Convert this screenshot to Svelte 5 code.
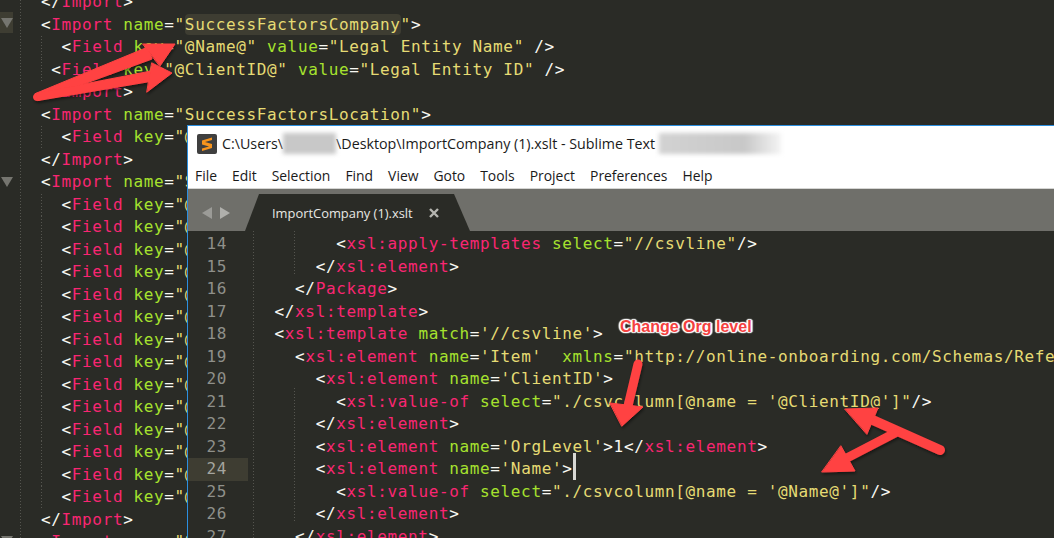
<script lang="ts">
  type Token = { cls: string; text: string };

  // tiny xml highlighter, good enough for the lines we show
  function highlight(line: string): Token[] {
    const tokens: Token[] = [];
    const re = /(^\s+)|(<\/?|\/?>)|("[^"]*"?|'[^']*')|(=)|(\|)|(\s+)|([A-Za-z][\w:-]*(?==))|([A-Za-z][\w:-]*)|(.)/g;
    let afterOpen = false;
    let inTag = false;
    for (const m of line.matchAll(re)) {
      const text = m[0];
      if (m[1] || m[6]) tokens.push({ cls: '', text });
      else if (m[2]) {
        tokens.push({ cls: 'punct', text });
        afterOpen = text.startsWith('<');
        inTag = afterOpen;
      } else if (m[3]) tokens.push({ cls: 'str', text });
      else if (m[4]) tokens.push({ cls: 'punct', text });
      else if (m[5]) tokens.push({ cls: 'caret', text: '' });
      else if (m[7] && inTag) tokens.push({ cls: 'attr', text });
      else if (m[8] && afterOpen) {
        tokens.push({ cls: 'tag', text });
        afterOpen = false;
      } else tokens.push({ cls: 'punct', text });
    }
    return tokens;
  }

  // these run under the front window, only the start of them shows
  const field = '  <Field key="@';
  const backLines = [
    '</Import>',
    '<Import name="SuccessFactorsCompany">',
    '  <Field key="@Name@" value="Legal Entity Name" />',
    ' <Field key="@ClientID@" value="Legal Entity ID" />',
    '</Import>',
    '<Import name="SuccessFactorsLocation">',
    field,
    '</Import>',
    '<Import name="S',
    ...Array(14).fill(field),
    '</Import>',
    '<Import name="S'
  ];

  const frontLines = [
    { n: 14, text: '        <xsl:apply-templates select="//csvline"/>' },
    { n: 15, text: '      </xsl:element>' },
    { n: 16, text: '    </Package>' },
    { n: 17, text: '  </xsl:template>' },
    { n: 18, text: "  <xsl:template match='//csvline'>" },
    { n: 19, text: `    <xsl:element name='Item'  xmlns="http://online-onboarding.com/Schemas/Refe` },
    { n: 20, text: "      <xsl:element name='ClientID'>" },
    { n: 21, text: `        <xsl:value-of select="./csvcolumn[@name = '@ClientID@']"/>` },
    { n: 22, text: '      </xsl:element>' },
    { n: 23, text: "      <xsl:element name='OrgLevel'>1</xsl:element>" },
    { n: 24, text: "      <xsl:element name='Name'>|", active: true },
    { n: 25, text: `        <xsl:value-of select="./csvcolumn[@name = '@Name@']"/>` },
    { n: 26, text: '      </xsl:element>' },
    { n: 27, text: '    </xsl:element>' }
  ];

  const menu = ['File', 'Edit', 'Selection', 'Find', 'View', 'Goto', 'Tools', 'Project', 'Preferences', 'Help'];
</script>

<div class="screen">
  <div class="back">
    <div class="fold-col">
      <div class="fold current"><i></i></div>
      <div class="fold second"><i></i></div>
      <div class="fold third"><i></i></div>
    </div>
    <div class="back-code">
      {#each backLines as line}
        <div class="line" class:guide={line.startsWith(' ')}>{#each highlight(line) as t}{#if t.text === '"SuccessFactorsCompany"'}<span class="str">"<span class="word">SuccessFactorsCompany</span>"</span>{:else}<span class={t.cls}>{t.text}</span>{/if}{/each}</div>
      {/each}
    </div>
  </div>

  <div class="window">
    <div class="titlebar">
      <svg class="logo" viewBox="0 0 20 20" width="20" height="20">
        <rect width="20" height="20" rx="2" fill="#3f3f3f" />
        <path d="M15 3.5 5 6.5v4l7 2-7 2v2.5l10-3v-4l-7-2 7-2z" fill="#f7941d" />
      </svg>
      <span class="path">C:\Users\</span><span class="smudge user"></span><span class="path">\Desktop\ImportCompany (1).xslt - Sublime Text</span><span class="smudge licence"></span>
    </div>
    <div class="menubar">
      {#each menu as item}<span>{item}</span>{/each}
    </div>
    <div class="tabbar">
      <div class="arrows"><i class="left"></i><i class="right"></i></div>
      <div class="tab">
        <span>ImportCompany (1).xslt</span>
        <svg viewBox="0 0 10 10" width="10" height="10"><path d="M1 1 9 9M9 1 1 9" stroke="#b5b5b0" stroke-width="2.4" /></svg>
      </div>
    </div>
    <div class="front-code">
      {#each frontLines as line}
        <div class="row">
          <div class="num" class:active={line.active}>{line.n}</div>
          <div class="line">{#each highlight(line.text) as t}<span class={t.cls}>{t.text}</span>{/each}</div>
        </div>
      {/each}
    </div>
  </div>

  <svg class="arrows-layer" viewBox="0 0 1054 538" width="1054" height="538">
    <defs>
      <filter id="shade" x="-20%" y="-20%" width="140%" height="140%">
        <feDropShadow dx="1" dy="2" stdDeviation="1.5" flood-color="#000" flood-opacity="0.45" />
      </filter>
    </defs>
    <g fill="#ff4242" stroke="#ff4242" stroke-linecap="round" stroke-linejoin="round" filter="url(#shade)">
      <circle cx="37" cy="97" r="3.5" />
      <path d="M35.500 93.500 148 47 152 59 38.500 100.500z" stroke-width="1" />
      <path d="M36 93.500 151 71 153 81 38 100.500z" stroke-width="1" />
      <path d="M143 44 175 44 160 66z" stroke-width="1" />
      <path d="M152 63 172 73 147 92z" stroke-width="1" />
      <path d="M638 364 628 406" stroke-width="9" />
      <path d="M610 403 643 407 622 426z" stroke-width="1" />
      <path d="M940 450 866 417" stroke-width="10" />
      <path d="M845 409 878 408 867 434z" stroke-width="1" />
      <path d="M895 433 843 460" stroke-width="9" />
      <path d="M841 446 855 471 822 472z" stroke-width="1" />
    </g>
  </svg>

  <div class="note">Change Org level</div>
</div>

<style>
  :global(body) {
    margin: 0;
    background: #2a2b26;
  }

  .screen {
    position: relative;
    width: 1054px;
    height: 538px;
    overflow: hidden;
    background: #2a2b26;
  }

  .line {
    font-family: 'DejaVu Sans Mono', monospace;
    font-size: 16px;
    letter-spacing: 0.64px;
    line-height: 22.5px;
    height: 22.5px;
    white-space: pre;
    color: #f8f8f2;
  }

  .line.guide {
    background: repeating-linear-gradient(#55554f 0 1px, transparent 1px 3px) 0 0 / 1px 100% no-repeat;
  }

  .tag { color: #f92672; }
  .attr { color: #a6e22e; }
  .str { color: #e6db74; }
  .punct { color: #f8f8f2; }

  .word {
    background: #3e3d32;
    border-radius: 4px;
    padding: 1px 0;
  }

  /* sits on the text without changing the height of the line */
  .caret {
    position: relative;
  }

  .caret::after {
    content: '';
    position: absolute;
    left: 0;
    top: -6px;
    width: 3px;
    height: 27px;
    background: #d8d8d4;
  }

  /* background editor */
  .back {
    display: flex;
    height: 538px;
    overflow: hidden;
  }

  .fold-col {
    width: 41px;
    flex: none;
    position: relative;
    background: repeating-linear-gradient(#55554f 0 1px, transparent 1px 3px) 20px 0 / 1px 100% no-repeat;
  }

  .fold {
    position: absolute;
    left: 0;
    width: 13px;
    height: 21px;
    display: flex;
    align-items: center;
    justify-content: center;
  }

  .fold.current { top: 12px; background: #3e3d32; }
  .fold.second { top: 171px; }
  .fold.third { top: 530px; }

  .fold i {
    border-left: 6px solid transparent;
    border-right: 6px solid transparent;
    border-top: 10px solid #75756f;
  }

  .back-code {
    margin-top: -9px;
  }

  /* front window */
  .window {
    position: absolute;
    left: 187px;
    top: 125px;
    width: 880px;
    height: 420px;
    box-sizing: border-box;
    border: 1px solid #2b8fe0;
    background: #fff;
    display: flex;
    flex-direction: column;
    font-family: 'Open Sans', 'Noto Sans', sans-serif;
    color: #1a1a1a;
  }

  .titlebar {
    display: flex;
    align-items: center;
    height: 37px;
    padding: 0 0 2px 9px;
    box-sizing: border-box;
    flex: none;
    font-size: 14.27px;
    white-space: pre;
  }

  .logo { margin-right: 5px; flex: none; }

  .smudge {
    height: 21px;
    background: #c8c8c8;
    filter: blur(2px);
  }

  .smudge.user { width: 53px; }

  .smudge.licence {
    width: 122px;
    margin-left: 4px;
    background: linear-gradient(90deg, #d2d2d2, #c8c8c8 70%, #f4f4f4);
  }

  .menubar {
    display: flex;
    gap: 15px;
    height: 25px;
    padding-left: 7px;
    align-items: center;
    flex: none;
    font-size: 13.9px;
  }

  .tabbar {
    flex: none;
    height: 43px;
    background: #6f6f6a;
    border-top: 1px solid #d5d5d3;
    box-sizing: border-box;
    display: flex;
    align-items: flex-end;
  }

  .arrows {
    width: 57px;
    height: 37px;
    display: flex;
    gap: 8px;
    align-items: center;
    padding-left: 14px;
    box-sizing: border-box;
  }

  .arrows i {
    border-top: 6px solid transparent;
    border-bottom: 6px solid transparent;
  }

  .arrows .left { border-right: 10px solid #9b9b97; }
  .arrows .right { border-left: 10px solid #b0b0ac; }

  .tab {
    width: 225px;
    height: 37px;
    background: #2a2b26;
    clip-path: polygon(14px 0, 209px 0, 225px 100%, 0 100%);
    display: flex;
    align-items: center;
    gap: 16px;
    padding-left: 27px;
    box-sizing: border-box;
    color: #e8e8e4;
    font-size: 12.9px;
  }

  .front-code {
    flex: 1;
    background:
      repeating-linear-gradient(#55554f 0 1px, transparent 1px 3px) 106px 0 / 1px 45px no-repeat,
      repeating-linear-gradient(#55554f 0 1px, transparent 1px 3px) 106px 157px / 1px 135px no-repeat,
      repeating-linear-gradient(#55554f 0 1px, transparent 1px 3px) 65px 0 / 1px 100% no-repeat,
      #2a2b26;
    padding-top: 2px;
  }

  .row {
    display: flex;
  }

  .num {
    flex: none;
    width: 39px;
    margin-right: 6px;
    padding-right: 21px;
    text-align: right;
    font-family: 'DejaVu Sans Mono', monospace;
    font-size: 16px;
    letter-spacing: 0.64px;
    line-height: 22.5px;
    height: 22.5px;
    color: #8f908a;
  }

  .num.active {
    background: #3e3d32;
    color: #a5a59f;
  }

  .arrows-layer {
    position: absolute;
    left: 0;
    top: 0;
    pointer-events: none;
  }

  .note {
    position: absolute;
    left: 620px;
    top: 318px;
    font-family: 'Liberation Sans', sans-serif;
    font-weight: 700;
    font-size: 16px;
    line-height: 18px;
    color: #f4413f;
    text-shadow: 0 0 2px #fff, 0 0 2px #fff, 1px 1px 1px #fff, -1px -1px 1px #fff, 1px -1px 1px #fff, -1px 1px 1px #fff, 2px 0 1px #fff, -2px 0 1px #fff;
  }
</style>
